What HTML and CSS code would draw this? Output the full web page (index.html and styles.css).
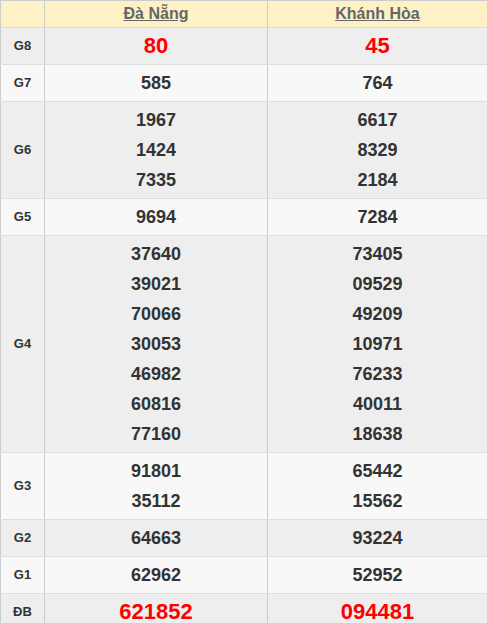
FILE: index.html
```html
<!DOCTYPE html>
<html>
<head>
<meta charset="utf-8">
<link rel="stylesheet" href="styles.css">
</head>
<body>
<table class="kq">
  <colgroup><col class="c-label"><col class="c-prov"><col class="c-prov2"></colgroup>
  <thead>
    <tr class="head"><th></th><th><a href="#">Đà Nẵng</a></th><th><a href="#">Khánh Hòa</a></th></tr>
  </thead>
  <tbody>
    <tr class="odd"><td class="lbl">G8</td><td class="red">80</td><td class="red">45</td></tr>
    <tr class="even"><td class="lbl">G7</td><td>585</td><td>764</td></tr>
    <tr class="odd"><td class="lbl">G6</td><td><div>1967</div><div>1424</div><div>7335</div></td><td><div>6617</div><div>8329</div><div>2184</div></td></tr>
    <tr class="even"><td class="lbl">G5</td><td>9694</td><td>7284</td></tr>
    <tr class="odd"><td class="lbl">G4</td><td><div>37640</div><div>39021</div><div>70066</div><div>30053</div><div>46982</div><div>60816</div><div>77160</div></td><td><div>73405</div><div>09529</div><div>49209</div><div>10971</div><div>76233</div><div>40011</div><div>18638</div></td></tr>
    <tr class="even"><td class="lbl">G3</td><td><div>91801</div><div>35112</div></td><td><div>65442</div><div>15562</div></td></tr>
    <tr class="odd"><td class="lbl">G2</td><td>64663</td><td>93224</td></tr>
    <tr class="even"><td class="lbl">G1</td><td>62962</td><td>52952</td></tr>
    <tr class="odd"><td class="lbl">ĐB</td><td class="red">621852</td><td class="red">094481</td></tr>
  </tbody>
</table>
</body>
</html>
```
FILE: styles.css
```css
html, body {
  margin: 0;
  padding: 0;
  background: #fff;
}
body {
  font-family: "Liberation Sans", Arial, sans-serif;
}
.kq {
  width: 487px;
  border-collapse: collapse;
  table-layout: fixed;
}
.c-label { width: 44px; }
.c-prov { width: 223px; }
.c-prov2 { width: 220px; }
.kq th, .kq td {
  border-left: 1px solid #ccc;
  border-right: 1px solid #ccc;
  border-top: 1px solid #ddd;
  border-bottom: 1px solid #ddd;
  text-align: center;
  vertical-align: middle;
}
.kq th {
  background: #fff1c6;
  height: 26px;
  padding: 0;
  font-size: 16px;
  font-weight: bold;
  border-top: 1px solid #ccc;
}
.kq th a {
  color: #666;
  text-decoration: underline;
}
.kq td {
  padding: 3px 0;
  line-height: 30px;
  font-size: 18px;
  font-weight: bold;
  color: #333;
}
.kq td.lbl {
  font-size: 13px;
  color: #333;
}
.kq td.red {
  color: #f00;
  font-size: 22px;
}
.odd td { background: #eee; }
.even td { background: #f8f8f8; }
```
